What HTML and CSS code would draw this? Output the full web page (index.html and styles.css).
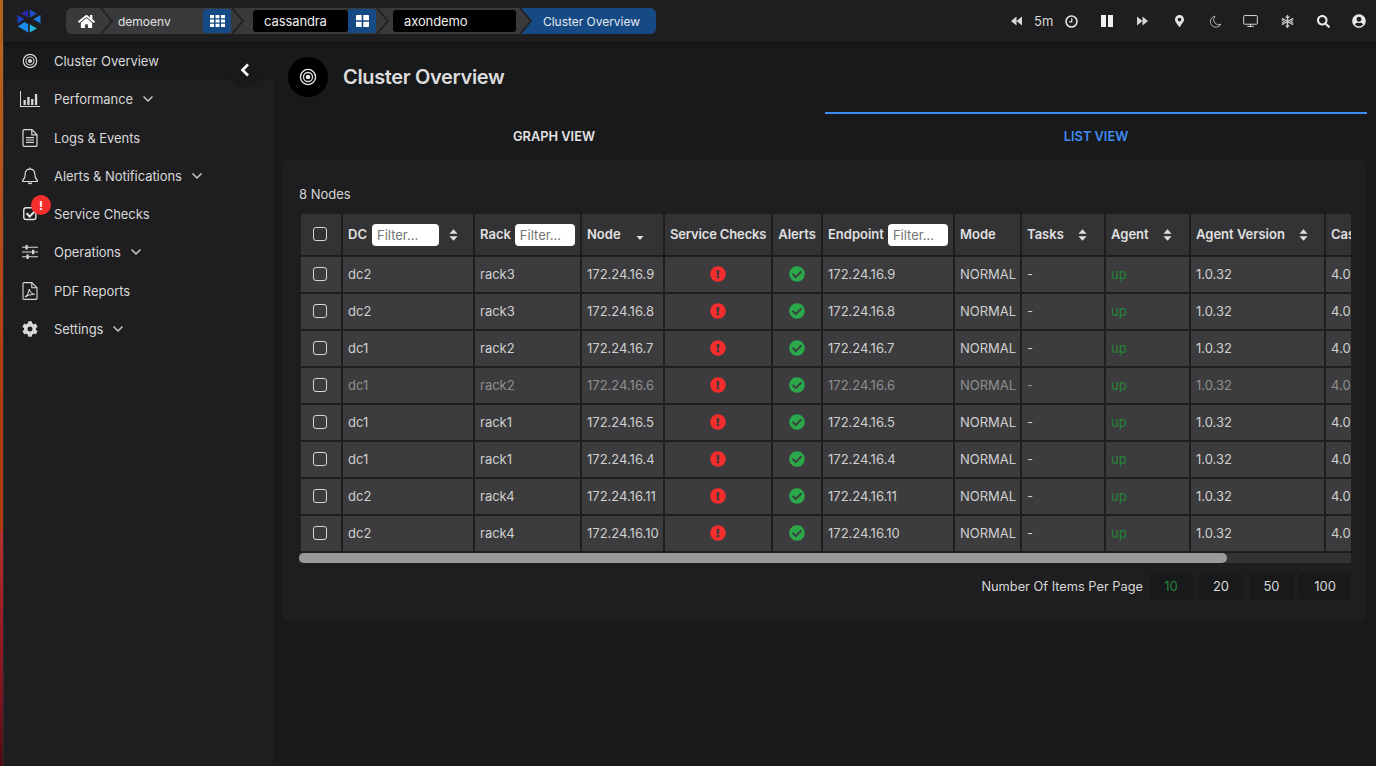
FILE: index.html
```html
<!DOCTYPE html>
<html lang="en">
<head>
<meta charset="utf-8">
<title>Cluster Overview</title>
<link rel="stylesheet" href="styles.css">
</head>
<body>
<svg class="defs" width="0" height="0" aria-hidden="true">
  <symbol id="i-err" viewBox="0 0 512 512"><path d="M504 256c0 136.997-111.043 248-248 248S8 392.997 8 256C8 119.083 119.043 8 256 8s248 111.083 248 248zm-248 50c-25.405 0-46 20.595-46 46s20.595 46 46 46 46-20.595 46-46-20.595-46-46-46zm-43.673-165.346l7.418 136c.347 6.364 5.609 11.346 11.982 11.346h48.546c6.373 0 11.635-4.982 11.982-11.346l7.418-136c.375-6.874-5.098-12.654-11.982-12.654h-63.383c-6.884 0-12.356 5.78-11.981 12.654z"/></symbol>
  <symbol id="i-ok" viewBox="0 0 512 512"><path d="M504 256c0 136.967-111.033 248-248 248S8 392.967 8 256 119.033 8 256 8s248 111.033 248 248zM227.314 387.314l184-184c6.248-6.248 6.248-16.379 0-22.627l-22.627-22.627c-6.248-6.249-16.379-6.249-22.628 0L216 308.118l-70.059-70.059c-6.248-6.248-16.379-6.248-22.628 0l-22.627 22.627c-6.248 6.248-6.248 16.379 0 22.627l104 104c6.249 6.249 16.379 6.249 22.628.001z"/></symbol>
  <symbol id="i-sort" viewBox="0 0 10 13"><path d="M5 0l4.500 5H.5zM5 13L.5 8h9z"/></symbol>
  <symbol id="i-target" viewBox="0 0 20 20"><g fill="none" stroke="currentColor"><circle cx="10" cy="10" r="8.400" stroke-width="1.500"/><circle cx="10" cy="10" r="5" stroke-width="1.400"/></g><circle cx="10" cy="10" r="2.600" fill="currentColor"/></symbol>
  <symbol id="i-down" viewBox="0 0 12 8"><path d="M1.500 1.500L6 6l4.500-4.500" fill="none" stroke="currentColor" stroke-width="1.500"/></symbol>
  <symbol id="i-sep" viewBox="0 0 17 26"><path d="M1 0l11 13L1 26" fill="none" stroke="#242426" stroke-width="2"/></symbol>
</svg>

<div class="window">
  <div class="stripe"></div>
  <div class="app">
    <header class="topbar">
      <svg class="logo" viewBox="0 0 24 24" width="24" height="24">
        <polygon points="11.200,0.500 11.200,8.800 4,4.600" fill="#2a2aa8"/>
        <polygon points="12.800,0.500 20,4.600 12.800,8.800" fill="#1f4fc0"/>
        <polygon points="0.500,6 7.600,10.200 0.500,14.400" fill="#1a3fbe"/>
        <polygon points="23.500,6 23.500,14.400 16.400,10.200" fill="#1c7ce0"/>
        <polygon points="7.600,13 11.200,15.200 11.200,23.500 4,19.300 0.800,17.400" fill="#1a8ae8"/>
        <polygon points="12.800,15.200 20,19.400 12.800,23.500" fill="#23b6d8"/>
      </svg>
      <nav class="crumbs">
        <div class="crumb-home">
          <svg viewBox="0 0 576 512" width="17" height="15" fill="#fff"><path d="M280.37 148.26L96 300.11V464a16 16 0 0 0 16 16l112.06-.29a16 16 0 0 0 15.92-16V368a16 16 0 0 1 16-16h64a16 16 0 0 1 16 16v95.64a16 16 0 0 0 16 16.05L464 480a16 16 0 0 0 16-16V300L295.67 148.26a12.19 12.19 0 0 0-15.3 0zM571.6 251.47L488 182.56V44.05a12 12 0 0 0-12-12h-56a12 12 0 0 0-12 12v72.61L318.47 43a48 48 0 0 0-61 0L4.34 251.47a12 12 0 0 0-1.6 16.9l25.5 31A12 12 0 0 0 45.15 301l235.22-193.74a12.19 12.19 0 0 1 15.3 0L530.9 301a12 12 0 0 0 16.9-1.6l25.5-31a12 12 0 0 0-1.7-16.93z"/></svg>
        </div>
        <svg class="sep" width="17" height="26"><use href="#i-sep"/></svg>
        <span class="crumb-text">demoenv</span>
        <span class="crumb-btn">
          <svg viewBox="0 0 15 12" width="15" height="12" fill="#fff"><path d="M0 0h4v3.300H0zM5.500 0h4v3.300h-4zM11 0h4v3.300h-4zM0 4.400h4v3.200H0zM5.500 4.400h4v3.200h-4zM11 4.400h4v3.200h-4zM0 8.700h4V12H0zM5.500 8.700h4V12h-4zM11 8.700h4V12h-4z"/></svg>
        </span>
        <svg class="sep sep-wide" width="17" height="26"><use href="#i-sep"/></svg>
        <span class="crumb-pill crumb-pill-a">cassandra</span>
        <span class="crumb-btn">
          <svg viewBox="0 0 13 12" width="13" height="12" fill="#fff"><path d="M0 1a1 1 0 0 1 1-1h4.700v5.300H0zM7.300 0H12a1 1 0 0 1 1 1v4.300H7.300zM0 6.700h5.700V12H1a1 1 0 0 1-1-1zM7.300 6.700H13V11a1 1 0 0 1-1 1H7.300z"/></svg>
        </span>
        <svg class="sep" width="17" height="26"><use href="#i-sep"/></svg>
        <span class="crumb-pill crumb-pill-b">axondemo</span>
        <svg class="sep sep-last" width="17" height="26"><use href="#i-sep"/></svg>
        <span class="crumb-current">Cluster Overview</span>
      </nav>
      <div class="tools">
        <span class="tool tool-back"><svg viewBox="0 0 12 10" width="11" height="10" fill="#d8d8d8"><path d="M6 0v10L0 5zM12 0v10L6 5z"/></svg></span>
        <span class="tool-time">5m</span>
        <span class="tool tool-clock"><svg viewBox="0 0 14 14" width="13" height="13" fill="none" stroke="#e4e4e4"><circle cx="7" cy="7" r="5.900" stroke-width="1.700"/><path d="M7.300 3.500v3.800H4.500" stroke-width="1.300"/></svg></span>
        <span class="tool tool-pause"><svg viewBox="0 0 12 12" width="12" height="12" fill="#f0f0f0"><path d="M0 0h5v12H0zM7 0h5v12H7z"/></svg></span>
        <span class="tool tool-fwd"><svg viewBox="0 0 12 10" width="11" height="10" fill="#d8d8d8"><path d="M0 0l6 5-6 5zM6 0l6 5-6 5z"/></svg></span>
        <span class="tool"><svg viewBox="0 0 384 512" width="9" height="12" fill="#e4e4e4"><path d="M172.268 501.67C26.97 291.031 0 269.413 0 192 0 85.961 85.961 0 192 0s192 85.961 192 192c0 77.413-26.97 99.031-172.268 309.67-9.535 13.774-29.930 13.773-39.464 0zM192 272c44.183 0 80-35.817 80-80s-35.817-80-80-80-80 35.817-80 80 35.817 80 80 80z"/></svg></span>
        <span class="tool"><svg viewBox="0 0 14 14" width="13" height="13" fill="none" stroke="#bdbdbd" stroke-width="1"><path d="M6.500 1.200A6 6 0 1 0 12.800 10 5.500 5.500 0 0 1 6.500 1.200z"/></svg></span>
        <span class="tool tool-screen"><svg viewBox="0 0 16 13" width="15" height="12" fill="none" stroke="#e4e4e4" stroke-width="1"><rect x=".6" y=".6" width="14.800" height="9.400" rx="1"/><path d="M8 10v2.200M4.500 12.400h7"/></svg></span>
        <span class="tool"><svg viewBox="0 0 14 14" width="13" height="13" fill="none" stroke="#c8c8c8" stroke-width="1.500"><path d="M7 0v14M1 3.500l12 7M13 3.500l-12 7"/><path d="M5 1.500l2 2 2-2M5 12.500l2-2 2 2M.8 5l2.700 2-2.700 2M13.200 5l-2.700 2 2.700 2" stroke-width="1.200"/></svg></span>
        <span class="tool"><svg viewBox="0 0 512 512" width="13" height="13" fill="#e8e8e8"><path d="M505 442.700L405.300 343c-4.500-4.500-10.600-7-17-7H372c27.600-35.300 44-79.700 44-128C416 93.100 322.900 0 208 0S0 93.100 0 208s93.100 208 208 208c48.300 0 92.700-16.400 128-44v16.300c0 6.400 2.500 12.500 7 17l99.700 99.700c9.400 9.400 24.600 9.400 33.900 0l28.300-28.300c9.400-9.400 9.400-24.600.1-34zM208 336c-70.700 0-128-57.200-128-128 0-70.700 57.200-128 128-128 70.700 0 128 57.200 128 128 0 70.700-57.200 128-128 128z"/></svg></span>
        <span class="tool"><svg viewBox="0 0 496 512" width="14" height="14" fill="#e8e8e8"><path d="M248 8C111 8 0 119 0 256s111 248 248 248 248-111 248-248S385 8 248 8zm0 96c48.600 0 88 39.400 88 88s-39.400 88-88 88-88-39.400-88-88 39.400-88 88-88zm0 344c-58.700 0-111.300-26.600-146.500-68.200 18.800-35.400 55.600-59.800 98.500-59.800 2.400 0 4.800.4 7.100 1.100 13 4.200 26.600 6.900 40.900 6.900 14.300 0 28-2.700 40.900-6.900 2.300-.7 4.700-1.100 7.100-1.100 42.900 0 79.700 24.400 98.500 59.800C359.300 421.400 306.700 448 248 448z"/></svg></span>
      </div>
    </header>

    <div class="body">
      <aside class="sidebar">
        <a class="nav-item nav-active"><span class="nav-icon"><svg width="16" height="16"><use href="#i-target"/></svg></span><span>Cluster Overview</span></a>
        <a class="nav-item"><span class="nav-icon"><svg viewBox="0 0 20 16" width="20" height="16" fill="currentColor"><path d="M0 0h1v15h19v1H0z"/><path d="M3.500 9h2.300v5H3.500zM7.300 6h2.300v8H7.300zM11.100 8h2.300v6h-2.300zM14.900 3h2.300v11h-2.300z"/></svg></span><span>Performance</span><svg class="nav-caret" width="12" height="8"><use href="#i-down"/></svg></a>
        <a class="nav-item"><span class="nav-icon"><svg viewBox="0 0 16 18" width="16" height="18" fill="none" stroke="currentColor" stroke-width="1.200"><path d="M1 1.800A1.200 1.200 0 0 1 2.200.6h7.600L15 5.800v10.400a1.200 1.200 0 0 1-1.200 1.200H2.200A1.200 1.200 0 0 1 1 16.200z"/><path d="M9.800.6v5.200H15M4 8.600h8M4 11h8M4 13.400h8"/></svg></span><span>Logs &amp; Events</span></a>
        <a class="nav-item"><span class="nav-icon"><svg viewBox="0 0 16 18" width="16" height="18" fill="none" stroke="currentColor" stroke-width="1.200"><path d="M8 2.200c-3 0-4.800 2.200-4.800 5 0 4-1.500 5-2.600 6.300-.3.400 0 1 .5 1h13.800c.5 0 .8-.6.500-1-1.100-1.300-2.600-2.300-2.600-6.300 0-2.800-1.800-5-4.800-5z"/><path d="M8 .4v1.800M6.300 15.500a1.800 1.800 0 0 0 3.400 0"/></svg></span><span>Alerts &amp; Notifications</span><svg class="nav-caret" width="12" height="8"><use href="#i-down"/></svg></a>
        <a class="nav-item"><span class="nav-icon nav-icon-check"><svg viewBox="0 0 16 15" width="15" height="14"><rect x=".8" y=".8" width="13" height="12.600" rx="2.500" fill="none" stroke="currentColor" stroke-width="1.500"/><path d="M3.800 6.800l3.300 3.300 5.600-5.600" fill="none" stroke="currentColor" stroke-width="2.300"/></svg><span class="nav-badge">!</span></span><span>Service Checks</span></a>
        <a class="nav-item"><span class="nav-icon"><svg viewBox="0 0 16 14" width="16" height="14" fill="currentColor"><path d="M0 1.800h16v1H0zM0 6.500h16v1H0zM0 11.200h16v1H0z"/><path d="M3.500 0h2.200v4.600H3.500zM10 4.700h2.200v4.600H10zM4.500 9.400h2.200V14H4.500z"/></svg></span><span>Operations</span><svg class="nav-caret" width="12" height="8"><use href="#i-down"/></svg></a>
        <a class="nav-item"><span class="nav-icon"><svg viewBox="0 0 16 18" width="16" height="18" fill="none" stroke="currentColor" stroke-width="1.100"><path d="M1 1.800A1.200 1.200 0 0 1 2.200.6h7.600L15 5.800v10.400a1.200 1.200 0 0 1-1.200 1.200H2.200A1.200 1.200 0 0 1 1 16.200z"/><path d="M9.800.6v5.200H15M3 15c2-1 3.500-4 4.300-8 .6 3 2.700 5 5.700 5.300-3-.3-7 .6-10 2.700z"/></svg></span><span>PDF Reports</span></a>
        <a class="nav-item"><span class="nav-icon"><svg viewBox="0 0 512 512" width="16" height="16" fill="currentColor"><path d="M487.400 315.700l-42.600-24.600c4.300-23.200 4.300-47 0-70.200l42.600-24.600c4.900-2.800 7.100-8.600 5.500-14-11.100-35.600-30-67.800-54.700-94.600-3.800-4.100-10-5.100-14.800-2.300L380.800 110c-17.900-15.400-38.500-27.300-60.800-35.100V25.800c0-5.600-3.900-10.500-9.400-11.700-36.700-8.200-74.300-7.800-109.200 0-5.500 1.200-9.400 6.100-9.400 11.700V75c-22.200 7.900-42.800 19.800-60.800 35.100L88.700 85.500c-4.900-2.800-11-1.900-14.800 2.300-24.700 26.700-43.600 58.900-54.700 94.600-1.700 5.400.6 11.200 5.500 14L67.300 221c-4.300 23.200-4.300 47 0 70.200l-42.600 24.600c-4.900 2.800-7.100 8.600-5.500 14 11.100 35.600 30 67.800 54.700 94.600 3.800 4.100 10 5.100 14.800 2.300l42.600-24.600c17.900 15.400 38.500 27.300 60.800 35.100v49.200c0 5.600 3.900 10.500 9.400 11.700 36.700 8.200 74.300 7.800 109.200 0 5.500-1.200 9.400-6.100 9.400-11.700v-49.200c22.200-7.900 42.800-19.800 60.800-35.100l42.600 24.600c4.900 2.800 11 1.900 14.800-2.300 24.700-26.700 43.600-58.900 54.700-94.600 1.500-5.500-.7-11.300-5.600-14.100zM256 336c-44.100 0-80-35.900-80-80s35.900-80 80-80 80 35.900 80 80-35.900 80-80 80z"/></svg></span><span>Settings</span><svg class="nav-caret" width="12" height="8"><use href="#i-down"/></svg></a>
        <button class="collapse" type="button" aria-label="Collapse"><svg viewBox="0 0 10 14" width="10" height="14"><path d="M8 1.500L2.500 7 8 12.500" fill="none" stroke="#fff" stroke-width="2.600"/></svg></button>
      </aside>

      <main class="main">
        <div class="page-head">
          <span class="page-icon"><svg width="18" height="18"><use href="#i-target"/></svg></span>
          <h1>Cluster Overview</h1>
        </div>
        <div class="tabs">
          <div class="tab">GRAPH VIEW</div>
          <div class="tab tab-active">LIST VIEW</div>
        </div>
        <section class="panel">
          <div class="count">8 Nodes</div>
          <div class="scroller">
            <table class="grid">
              <thead>
                <tr>
                  <th class="c-check"><span class="box"></span></th>
                  <th class="c-dc"><div class="th-in"><span>DC</span><input class="filter filter-dc" placeholder="Filter..."><svg class="sort sort-gap" width="9" height="12"><use href="#i-sort"/></svg></div></th>
                  <th class="c-rack"><div class="th-in"><span>Rack</span><input class="filter filter-rack" placeholder="Filter..."></div></th>
                  <th class="c-node"><div class="th-in"><span>Node</span><svg class="sort-node" viewBox="0 0 10 5" width="8" height="4"><path d="M5 5L.5 0h9z" fill="#e0e0e0"/></svg></div></th>
                  <th class="c-svc">Service Checks</th>
                  <th class="c-alert">Alerts</th>
                  <th class="c-end"><div class="th-in"><span>Endpoint</span><input class="filter filter-end" placeholder="Filter..."></div></th>
                  <th class="c-mode">Mode</th>
                  <th class="c-tasks"><div class="th-in"><span>Tasks</span><svg class="sort sort-wide" width="9" height="12"><use href="#i-sort"/></svg></div></th>
                  <th class="c-agent"><div class="th-in"><span>Agent</span><svg class="sort sort-wide" width="9" height="12"><use href="#i-sort"/></svg></div></th>
                  <th class="c-ver"><div class="th-in"><span>Agent Version</span><svg class="sort sort-wide" width="9" height="12"><use href="#i-sort"/></svg></div></th>
                  <th class="c-cas">Cassandra</th>
                </tr>
              </thead>
              <tbody>
                <tr><td class="center"><span class="box"></span></td><td>dc2</td><td>rack3</td><td>172.24.16.9</td><td class="center"><svg class="st-err"><use href="#i-err"/></svg></td><td class="center"><svg class="st-ok"><use href="#i-ok"/></svg></td><td>172.24.16.9</td><td>NORMAL</td><td>-</td><td class="up">up</td><td>1.0.32</td><td>4.0.1</td></tr>
                <tr><td class="center"><span class="box"></span></td><td>dc2</td><td>rack3</td><td>172.24.16.8</td><td class="center"><svg class="st-err"><use href="#i-err"/></svg></td><td class="center"><svg class="st-ok"><use href="#i-ok"/></svg></td><td>172.24.16.8</td><td>NORMAL</td><td>-</td><td class="up">up</td><td>1.0.32</td><td>4.0.1</td></tr>
                <tr><td class="center"><span class="box"></span></td><td>dc1</td><td>rack2</td><td>172.24.16.7</td><td class="center"><svg class="st-err"><use href="#i-err"/></svg></td><td class="center"><svg class="st-ok"><use href="#i-ok"/></svg></td><td>172.24.16.7</td><td>NORMAL</td><td>-</td><td class="up">up</td><td>1.0.32</td><td>4.0.1</td></tr>
                <tr class="dim"><td class="center"><span class="box"></span></td><td>dc1</td><td>rack2</td><td>172.24.16.6</td><td class="center"><svg class="st-err"><use href="#i-err"/></svg></td><td class="center"><svg class="st-ok"><use href="#i-ok"/></svg></td><td>172.24.16.6</td><td>NORMAL</td><td>-</td><td class="up">up</td><td>1.0.32</td><td>4.0.1</td></tr>
                <tr><td class="center"><span class="box"></span></td><td>dc1</td><td>rack1</td><td>172.24.16.5</td><td class="center"><svg class="st-err"><use href="#i-err"/></svg></td><td class="center"><svg class="st-ok"><use href="#i-ok"/></svg></td><td>172.24.16.5</td><td>NORMAL</td><td>-</td><td class="up">up</td><td>1.0.32</td><td>4.0.1</td></tr>
                <tr><td class="center"><span class="box"></span></td><td>dc1</td><td>rack1</td><td>172.24.16.4</td><td class="center"><svg class="st-err"><use href="#i-err"/></svg></td><td class="center"><svg class="st-ok"><use href="#i-ok"/></svg></td><td>172.24.16.4</td><td>NORMAL</td><td>-</td><td class="up">up</td><td>1.0.32</td><td>4.0.1</td></tr>
                <tr><td class="center"><span class="box"></span></td><td>dc2</td><td>rack4</td><td>172.24.16.11</td><td class="center"><svg class="st-err"><use href="#i-err"/></svg></td><td class="center"><svg class="st-ok"><use href="#i-ok"/></svg></td><td>172.24.16.11</td><td>NORMAL</td><td>-</td><td class="up">up</td><td>1.0.32</td><td>4.0.1</td></tr>
                <tr><td class="center"><span class="box"></span></td><td>dc2</td><td>rack4</td><td>172.24.16.10</td><td class="center"><svg class="st-err"><use href="#i-err"/></svg></td><td class="center"><svg class="st-ok"><use href="#i-ok"/></svg></td><td>172.24.16.10</td><td>NORMAL</td><td>-</td><td class="up">up</td><td>1.0.32</td><td>4.0.1</td></tr>
              </tbody>
            </table>
          </div>
          <div class="hscroll"><div class="hthumb"></div></div>
          <div class="pager">
            <span class="pager-label">Number Of Items Per Page</span>
            <span class="page-btn page-on">10</span>
            <span class="page-btn page-20">20</span>
            <span class="page-btn page-50">50</span>
            <span class="page-btn page-wide">100</span>
          </div>
        </section>
      </main>
    </div>
  </div>
</div>
</body>
</html>
```
FILE: styles.css
```css
* { box-sizing: border-box; }
html, body { margin: 0; height: 100%; overflow: hidden; }
body { font-family: Inter, "Liberation Sans", sans-serif; font-size: 13px; color: #d6d6d6; background: #18191b; }
.defs { position: absolute; }

.window { display: flex; height: 766px; width: 1376px; }
.stripe { width: 4px; flex: none; background: linear-gradient(180deg, #b8671f 0, #b5501a 200px, #b03a10 400px, #b03a10 530px, #b3332c 531px, #9a1c24 620px, #7a1420 700px, #4a0c12 766px); border-right: 1px solid #2c2a2a; }
.app { flex: 1; min-width: 0; display: flex; flex-direction: column; }

/* top bar */
.topbar { height: 42px; flex: none; display: flex; align-items: center; background: #1e1e20; box-shadow: 0 1px 3px rgba(0,0,0,.45); position: relative; z-index: 2; }
.logo { margin-left: 13px; flex: none; }
.crumbs { margin-left: 25px; height: 26px; width: 590px; flex: none; display: flex; align-items: center; background: #3a3a3c; border-radius: 6px; }
.crumb-home { width: 34px; display: flex; justify-content: center; padding-left: 6px; }
.sep { flex: none; }
.sep-wide { margin-right: 5px; }
.sep-last { margin-left: 3px; margin-right: -16px; position: relative; z-index: 1; }
.crumb-text { width: 86px; padding-left: 1px; color: #e4e4e4; font-size: 12px; }
.crumb-btn { width: 28px; height: 24px; flex: none; background: #154a85; border-radius: 3px; display: flex; align-items: center; justify-content: center; }
.crumb-pill { height: 22px; background: #000; color: #eee; display: flex; align-items: center; padding-left: 11px; border-radius: 3px; flex: none; letter-spacing: -.1px; }
.crumb-pill-a { width: 95px; }
.crumb-pill-b { width: 123px; }
.crumb-current { width: 136px; height: 26px; flex: none; color: #e4e8ee; font-size: 12px; letter-spacing: -.03px; display: flex; align-items: center; padding-left: 23px; background: #154a85; border-radius: 0 6px 6px 0; clip-path: polygon(0 0, 100% 0, 100% 100%, 0 100%, 11px 50%); }

.tools { margin-left: auto; margin-right: -1px; display: flex; align-items: center; }
.tool { width: 36px; display: flex; justify-content: center; align-items: center; }
.tool-back { width: 34px; padding-right: 2px; }
.tool-time { width: 17px; color: #d8d8d8; white-space: nowrap; }
.tool-clock { width: 40px; }
.tool-pause { width: 32px; }
.tool-fwd { width: 38px; }
.tool-screen { width: 36px; padding-right: 1px; }

/* body */
.body { flex: 1; min-height: 0; display: flex; }
.sidebar { width: 269px; flex: none; background: #1e1e20; position: relative; border-bottom-left-radius: 8px; }
.nav-item { height: 38.25px; display: flex; align-items: center; color: #d8d8d8; letter-spacing: -.05px; }
.nav-active { background: #18191b; }
.nav-icon { width: 50px; flex: none; padding-left: 10px; padding-right: 8px; display: flex; justify-content: center; align-items: center; position: relative; color: #d8d8d8; }
.nav-caret { margin-left: 9px; color: #c8c8c8; }
.nav-icon-check { color: #e4e4e4; }
.nav-badge { position: absolute; left: 27px; top: -12px; width: 20px; height: 20px; border-radius: 50%; background: #f52d2d; color: #fff; font-size: 12px; font-weight: 700; display: flex; align-items: center; justify-content: center; }
.collapse { position: absolute; left: 225px; top: 10px; width: 32px; height: 36px; padding: 0; border: 0; border-radius: 0 0 16px 16px; background: #18191b; display: flex; align-items: center; justify-content: center; }

/* main */
.main { flex: 1; min-width: 0; padding: 0 9px 0 10px; }
.page-head { height: 70px; display: flex; align-items: center; padding-left: 5px; }
.page-icon { width: 40px; height: 40px; border-radius: 50%; background: #000; color: #e8e8e8; display: flex; align-items: center; justify-content: center; margin-right: 15px; }
h1 { margin: 0; font-size: 20px; font-weight: 600; color: #dcdcdc; letter-spacing: -.35px; }
.tabs { display: flex; height: 48px; }
.tab { flex: 1; display: flex; align-items: center; justify-content: center; font-size: 12.800px; font-weight: 600; color: #e4e4e4; border-top: 2px solid transparent; padding-bottom: 2px; }
.tab-active { color: #3f8cf0; border-top-color: #3f8cf0; }

.panel { height: 461px; background: #1e1e20; border-radius: 5px; padding: 0 16px; }
.count { height: 52px; padding-top: 26px; line-height: 16px; }
.scroller { overflow: hidden; }
.grid { border-collapse: separate; border-spacing: 2px; table-layout: fixed; width: 1129px; }
.grid th { height: 41px; background: #333335; color: #e0e0e0; font-weight: 600; font-size: 13px; text-align: left; padding: 0 5px 2px; white-space: nowrap; overflow: hidden; }
.grid td { height: 35px; background: #3c3c3e; color: #cfcfcf; padding: 0 5px 2px; white-space: nowrap; overflow: hidden; }
.grid td.center, .grid th.c-check, .grid th.c-svc, .grid th.c-alert { text-align: center; }
.grid td.center svg { display: block; margin: 0 auto; }
.grid th.c-check { padding: 0 2px 4px 0; }
.grid td:first-child { padding: 0 2px 4px 0; }
.dim td { color: #8f8f8f; }
.grid td.up { color: #238636; }
.c-check { width: 40px; }
.c-dc { width: 130px; }
.c-rack { width: 105px; }
.c-node { width: 81px; }
.c-svc { width: 106px; letter-spacing: -.15px; }
.c-alert { width: 48px; }
.c-end { width: 130px; }
.c-mode { width: 65px; }
.c-tasks { width: 82px; }
.c-agent { width: 83px; }
.c-ver { width: 133px; }
.c-cas { width: 100px; }
.box { display: inline-block; width: 14px; height: 14px; border: 1.500px solid #d6d6d6; border-radius: 3px; vertical-align: middle; }
.th-in { display: flex; align-items: center; }
.filter { height: 22px; border: 0; border-radius: 4px; background: #fff; font: 13px Inter, "Liberation Sans", sans-serif; padding: 0 5px; margin: 2px 0 0 4px; min-width: 0; color: #666; }
.filter::placeholder { color: #757575; opacity: 1; }
.filter-dc { width: 67px; margin-left: 5px; }
.filter-rack { width: 60px; }
.filter-end { width: 60px; }
.sort { fill: #e0e0e0; flex: none; margin-top: 2px; }
.sort-gap { margin-left: 10px; }
.sort-node { margin-left: 15px; margin-top: 9px; }
.sort-wide { margin-left: 14px; }
.st-err { width: 16px; height: 16px; fill: #f52d2d; }
.st-ok { width: 16px; height: 16px; fill: #2aa84a; }

.hscroll { height: 10px; background: #333335; }
.hthumb { width: 928px; height: 10px; background: #9a9a9a; border-radius: 5px; }
.pager { display: flex; justify-content: flex-end; align-items: center; gap: 5px; margin-top: 10px; height: 27px; }
.pager-label { color: #d8d8d8; margin-right: 1px; font-size: 12.800px; }
.page-btn { width: 44px; height: 27px; background: #18191b; border-radius: 5px; display: flex; align-items: center; justify-content: center; color: #d8d8d8; padding-bottom: 2px; }
.page-on { color: #238636; }
.page-20 { width: 46px; }
.page-50 { width: 45px; }
.page-wide { width: 52px; }
```
